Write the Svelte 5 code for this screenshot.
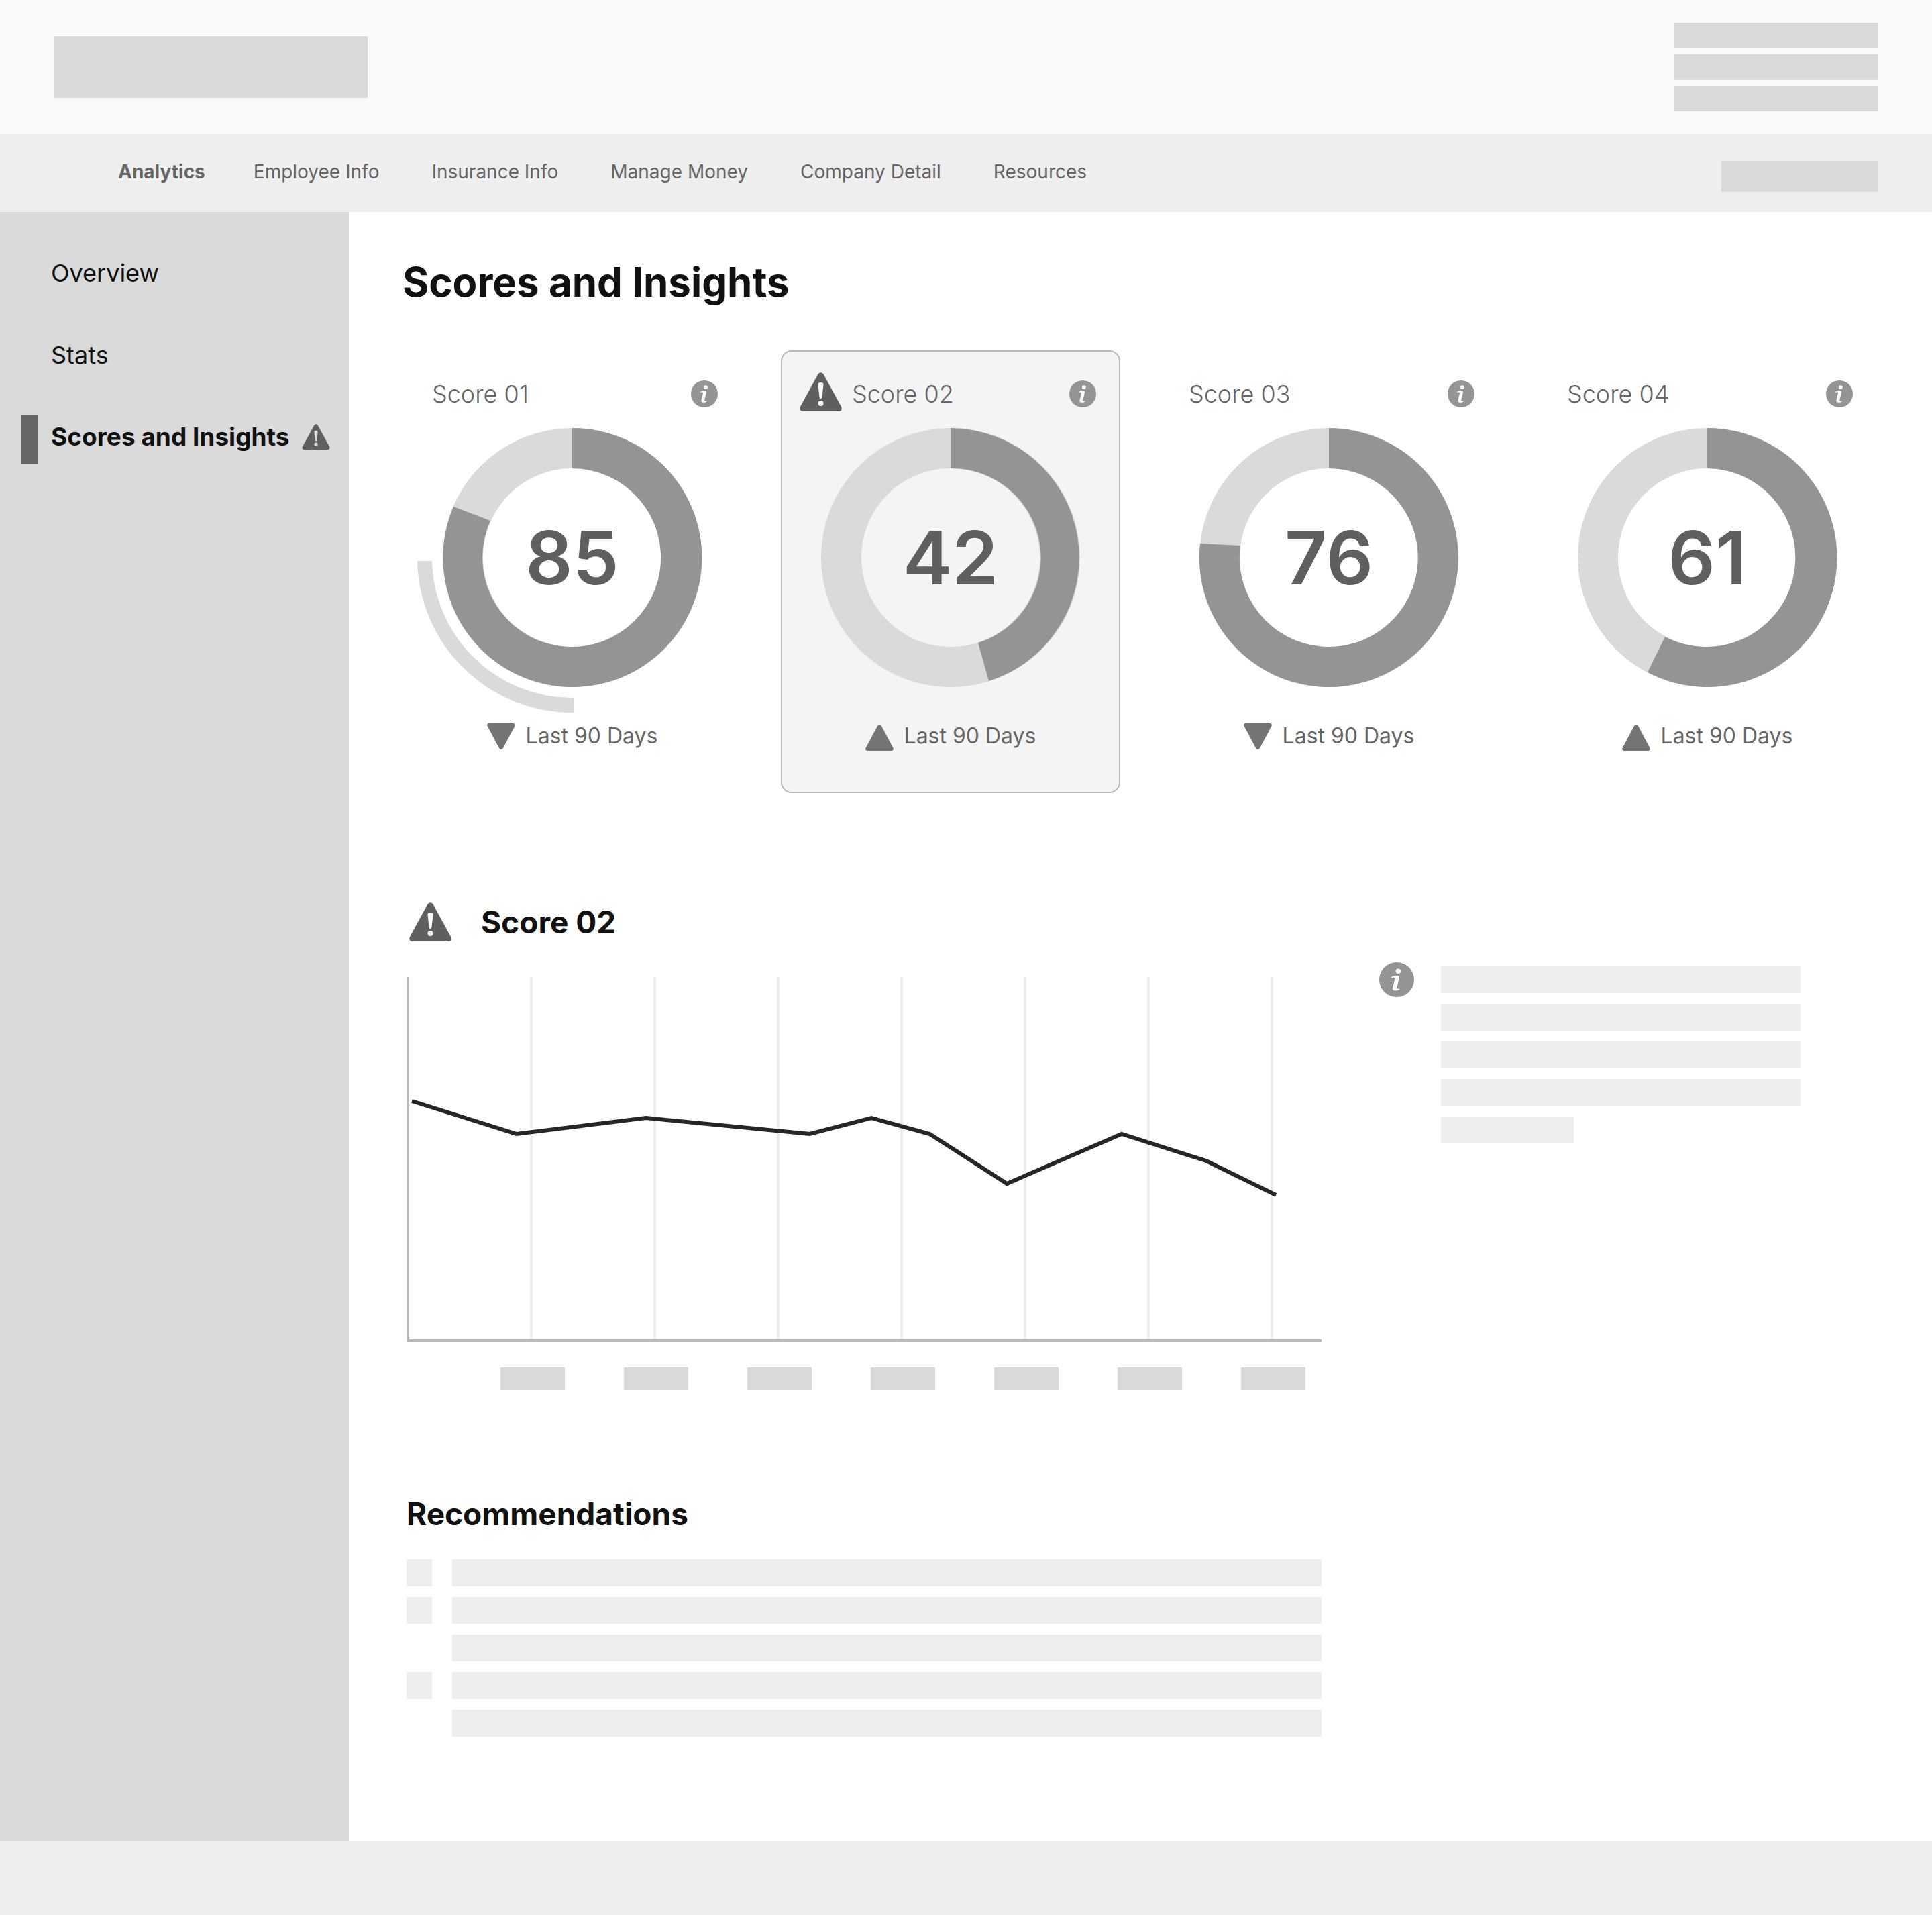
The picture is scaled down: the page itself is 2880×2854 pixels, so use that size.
<script>
  const navItems = ['Analytics', 'Employee Info', 'Insurance Info', 'Manage Money', 'Company Detail', 'Resources'];

  // Ring geometry is measured from the centre of a 480 x 480 box.
  const scores = [
    { name: 'Score 01', value: 85, trend: 'down', large: 1, outer: [-177, -76], inner: [-122, -55], range: true },
    { name: 'Score 02', value: 42, trend: 'up', large: 0, outer: [57, 184], inner: [41, 127], alert: true },
    { name: 'Score 03', value: 76, trend: 'down', large: 1, outer: [-192, -21], inner: [-132, -18] },
    { name: 'Score 04', value: 61, trend: 'up', large: 1, outer: [-89, 171], inner: [-63, 118] }
  ];

  const ring = (s) =>
    `M0-193A193 193 0 ${s.large} 1 ${s.outer.join(' ')}L${s.inner.join(' ')}A133 133 0 ${s.large} 0 0-133Z`;

  const gridLines = [186, 370, 554, 738, 922, 1106, 1290];
  const series = '8,185 164,234 357,210 601,234 693,210 780,234 895,308 1066,234 1192,274 1296,325';
  const recommendations = [true, true, false, true, false];
</script>

{#snippet alertIcon(kind)}
  <svg class="alert {kind}" viewBox="0 0 63 58" aria-hidden="true">
    <path class="shape" d="M27.500 2.500Q31.500-2 35.500 2.500L62 51Q64.500 57.500 58 58H5Q-1.500 57.500 1 51Z" />
    <path class="mark" d="M27.500 18Q27.500 15 31.500 15T35.500 18L33.500 37Q33.200 39 31.500 39T29.500 37Z" />
    <circle class="mark" cx="31.500" cy="46" r="4" />
  </svg>
{/snippet}

{#snippet infoIcon()}
  <svg class="info" viewBox="0 0 40 40" aria-hidden="true">
    <circle class="disc" cx="20" cy="20" r="20" />
    <circle class="mark" cx="21.800" cy="10.200" r="2.900" />
    <path class="mark" d="M14 17.200C15 15.800 17 15.300 20.500 15.300C22.600 15.300 23.300 16.300 22.900 18.200L20.300 29C20 30.600 20.800 30.900 23.500 30.300V31.200C22.300 32.300 20.600 32.700 18.700 32.700C15.800 32.700 15 31.200 15.500 29.200L18 19C18.400 17.400 17.300 17.100 14 17.800Z" />
  </svg>
{/snippet}

<div class="page">
  <header class="top">
    <div class="logo"></div>
    <div class="meta"><i></i><i></i><i></i></div>
  </header>

  <nav class="primary" aria-label="Primary">
    {#each navItems as item, i}
      <a href="#top" class:current={i === 0}>{item}</a>
    {/each}
    <span class="account"></span>
  </nav>

  <div class="body">
    <nav class="side" aria-label="Analytics">
      <a href="#overview">Overview</a>
      <a href="#stats">Stats</a>
      <a href="#scores" class="current">Scores and Insights {@render alertIcon('small')}</a>
    </nav>

    <main>
      <h1>Scores and Insights</h1>

      <section class="cards" aria-label="Scores">
        {#each scores as s}
          <article class="card" class:selected={s.alert}>
            <div class="card-head">
              {#if s.alert}{@render alertIcon('large')}{/if}
              <h2>{s.name}</h2>
              <button type="button" aria-label="About {s.name}">{@render infoIcon()}</button>
            </div>
            <div class="gauge">
              <svg viewBox="-240 -240 480 480" aria-hidden="true">
                <circle class="track" r="163" />
                <path class="fill" d={ring(s)} />
                {#if s.range}<path class="range" d="M-220 5A220 220 0 0 0 3 220" />{/if}
              </svg>
              <span class="value">{s.value}</span>
            </div>
            <p class="trend">
              <svg class={s.trend} viewBox="0 0 42 39" aria-hidden="true">
                {#if s.trend === 'down'}
                  <path d="M3 0H39Q43 .5 41.500 4L24 37Q21 41 18 37L.5 4Q-1 .5 3 0Z" />
                {:else}
                  <path d="M3 39H39Q43 38.500 41.500 35L24 2Q21-2 18 2L.5 35Q-1 38.500 3 39Z" />
                {/if}
              </svg>
              Last 90 Days
            </p>
          </article>
        {/each}
      </section>

      <div class="detail">
        <section class="report">
          <h2 class="with-icon">{@render alertIcon('large')}Score 02</h2>
          <svg class="chart" viewBox="0 0 1364 544" preserveAspectRatio="none" role="img" aria-label="Score 02 over time">
            {#each gridLines as x}<line class="grid" x1={x} x2={x} y1="0" y2="540" />{/each}
            <path class="axis" d="M2 0V542H1364" />
            <polyline class="series" points={series} />
          </svg>
          <div class="ticks">{#each gridLines as _}<i></i>{/each}</div>

          <h2 class="rec-title">Recommendations</h2>
          <ul class="recs">
            {#each recommendations as bullet}
              <li class:bullet><i></i></li>
            {/each}
          </ul>
        </section>

        <aside>
          {@render infoIcon()}
          <div class="lines"><i></i><i></i><i></i><i></i><i></i></div>
        </aside>
      </div>
    </main>
  </div>

  <footer></footer>
</div>

<style>
  :global(body) {
    margin: 0;
    background: #fff;
  }
  .page {
    font-family: Inter, 'Liberation Sans', sans-serif;
    color: #111;
  }
  a {
    color: inherit;
    text-decoration: none;
  }
  h1, h2, p, ul {
    margin: 0;
    padding: 0;
  }
  svg {
    display: block;
    flex: none;
  }
  i {
    display: block;
  }

  .top {
    display: flex;
    justify-content: space-between;
    align-items: center;
    height: 200px;
    padding: 0 80px;
    background: #fafafa;
  }
  .logo {
    width: 468px;
    height: 92px;
    background: #dadada;
  }
  .meta {
    display: grid;
    gap: 9px;
    width: 304px;
  }
  .meta i {
    height: 38px;
    background: #dadada;
  }

  .primary {
    display: flex;
    align-items: center;
    gap: 78px;
    height: 116px;
    padding: 0 80px 0 176px;
    background: #eee;
    color: #666;
    font-size: 28px;
    line-height: 36px;
  }
  .primary a {
    padding-bottom: 4px;
  }
  .primary .current {
    font-weight: 700;
    margin-right: -6px;
  }
  .account {
    width: 234px;
    height: 46px;
    margin: 10px 0 0 auto;
    background: #dadada;
  }

  .body {
    display: flex;
  }
  .side {
    display: flex;
    flex: none;
    flex-direction: column;
    gap: 48px;
    box-sizing: border-box;
    width: 520px;
    padding: 58px 0 0 32px;
    background: #dadada;
    font-size: 36px;
    line-height: 66px;
  }
  .side a {
    display: flex;
    align-items: center;
    border-left: 24px solid transparent;
    padding: 0 0 8px 20px;
    white-space: nowrap;
  }
  .side .current {
    border-color: #666;
    font-size: 37px;
    font-weight: 700;
  }

  .alert.small {
    width: 42px;
    height: 38px;
    margin-left: 18px;
  }
  .alert.large {
    width: 63px;
    height: 58px;
  }
  .alert .shape {
    fill: #5f5f5f;
  }
  .alert .mark,
  .info .mark {
    fill: #fff;
  }
  .alert.small .mark {
    fill: #dadada;
  }
  .info {
    width: 40px;
    height: 40px;
  }
  .info .disc {
    fill: #949494;
  }

  main {
    flex: 1;
    min-width: 0;
    padding: 64px 82px 156px 80px;
  }
  h1 {
    font-size: 60px;
    line-height: 80px;
    font-weight: 700;
  }

  .cards {
    display: grid;
    grid-template-columns: repeat(4, minmax(0, 1fr));
    gap: 58px;
    margin-top: 62px;
  }
  .card {
    box-sizing: border-box;
    height: 660px;
    border: 2px solid transparent;
    border-radius: 16px;
    padding-top: 29px;
  }
  .card.selected {
    border-color: #b9b9b9;
    background: #f4f4f4;
  }
  .card-head {
    display: flex;
    align-items: center;
    height: 68px;
    padding: 0 34px 0 42px;
  }
  .selected .card-head {
    gap: 15px;
    padding-left: 26px;
  }
  .card-head .alert {
    margin-bottom: 6px;
  }
  .card h2 {
    color: #666;
    font-size: 36px;
    line-height: 44px;
    font-weight: 300;
  }
  .card button {
    margin-left: auto;
    border: 0;
    padding: 0;
    background: none;
    cursor: pointer;
  }
  .gauge {
    display: grid;
    grid-template: 100% / 100%;
    place-items: center;
    height: 402px;
    margin-top: 9px;
  }
  .gauge > * {
    grid-area: 1 / 1;
  }
  .gauge svg {
    width: 480px;
    height: 480px;
  }
  .track {
    fill: none;
    stroke: #dadada;
    stroke-width: 60;
  }
  .fill {
    fill: #949494;
  }
  .range {
    fill: none;
    stroke: #dadada;
    stroke-width: 22;
  }
  .value {
    color: #5f5f5f;
    font-size: 110px;
    line-height: 120px;
    font-weight: 600;
  }
  .trend {
    display: flex;
    justify-content: center;
    align-items: center;
    gap: 16px;
    margin-top: 42px;
    color: #666;
    font-size: 32px;
    line-height: 46px;
  }
  .trend svg {
    width: 42px;
    height: 39px;
    fill: #747474;
  }
  .trend .up {
    padding-top: 4px;
  }

  .detail {
    display: flex;
    gap: 86px;
    padding: 152px 114px 0 6px;
  }
  .report {
    flex: 1;
    min-width: 0;
  }
  .report h2 {
    font-size: 46px;
    line-height: 80px;
    font-weight: 700;
  }
  .with-icon {
    display: flex;
    align-items: center;
    gap: 44px;
    padding-left: 4px;
  }
  .chart {
    width: 100%;
    height: 544px;
    margin-top: 42px;
  }
  .chart * {
    fill: none;
    vector-effect: non-scaling-stroke;
  }
  .grid {
    stroke: #eee;
    stroke-width: 4;
  }
  .axis {
    stroke: #b9b9b9;
    stroke-width: 4;
  }
  .series {
    stroke: #262626;
    stroke-width: 6;
  }
  .ticks {
    display: flex;
    justify-content: space-between;
    padding: 38px 24px 0 140px;
  }
  .ticks i {
    width: 96px;
    height: 34px;
    background: #dadada;
  }
  .report .rec-title {
    margin-top: 144px;
  }
  .recs {
    display: grid;
    gap: 16px;
    margin-top: 28px;
    list-style: none;
  }
  .recs li {
    display: grid;
    grid-template-columns: 38px minmax(0, 1fr);
    column-gap: 30px;
    height: 40px;
  }
  .recs .bullet::before {
    content: '';
    background: #eee;
  }
  .recs i {
    grid-column: 2;
    background: #eee;
  }

  aside {
    display: flex;
    flex: none;
    align-items: flex-start;
    gap: 40px;
    width: 628px;
    padding-top: 100px;
  }
  aside .info {
    width: 52px;
    height: 52px;
  }
  .lines {
    display: grid;
    flex: 1;
    gap: 16px;
    padding-top: 6px;
  }
  .lines i {
    height: 40px;
    background: #eee;
  }
  .lines i:last-child {
    width: 198px;
  }

  footer {
    height: 110px;
    background: #eee;
  }
</style>
